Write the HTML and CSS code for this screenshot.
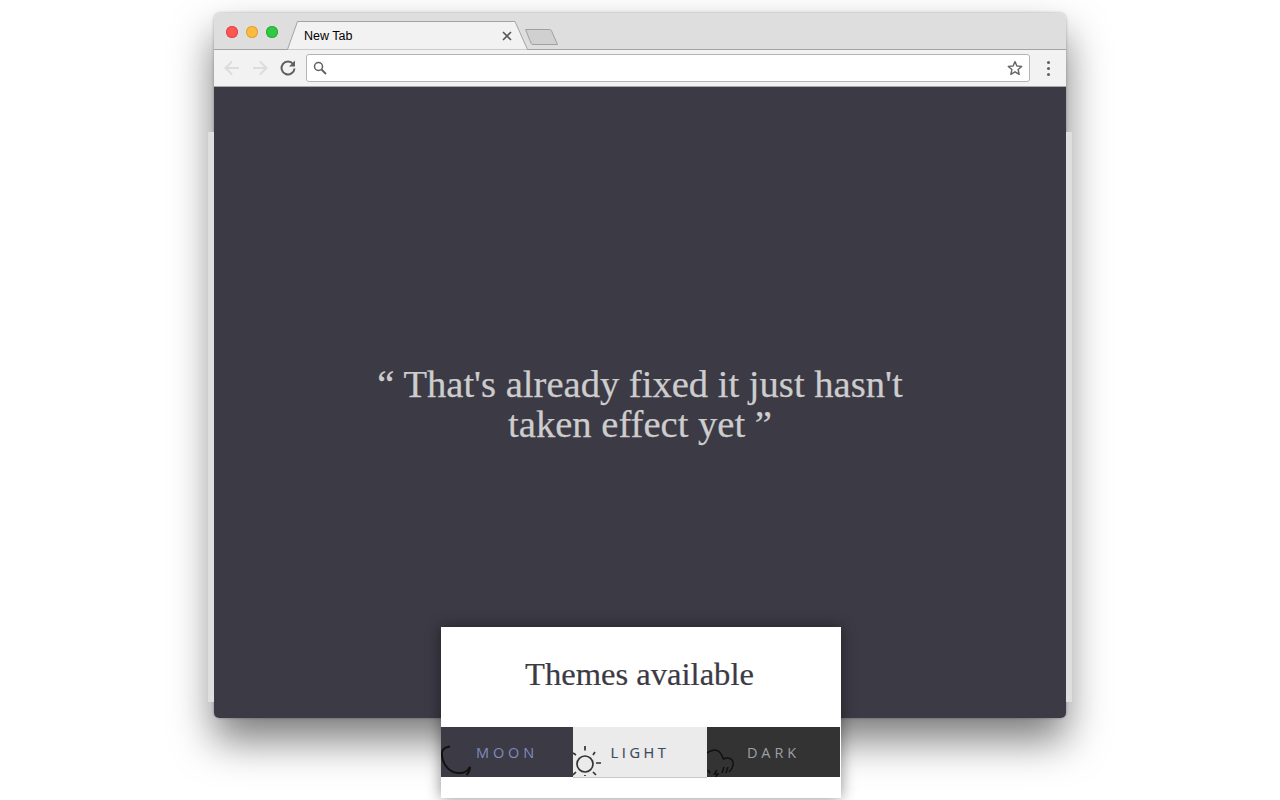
FILE: index.html
```html
<!DOCTYPE html>
<html lang="en">
<head>
<meta charset="utf-8">
<title>New Tab</title>
<link rel="stylesheet" href="styles.css">
</head>
<body>
<div class="stage">
  <div class="backsheet"></div>
  <div class="window">
    <header class="titlebar">
      <div class="lights">
        <span class="light light-red"></span>
        <span class="light light-yellow"></span>
        <span class="light light-green"></span>
      </div>
      <div class="tab">
        <svg class="tab-shape" width="242" height="30" viewBox="0 0 242 30"><path d="M0 28.500H0.500L10.500 0.500H228L240.500 28.500H242" fill="#f2f2f2" stroke="#a3a3a3" stroke-width="1"/></svg>
        <span class="tab-title">New Tab</span>
        <svg class="tab-close" width="10" height="10" viewBox="0 0 10 10"><path d="M1 1L9 9M9 1L1 9" stroke="#5a5a5a" stroke-width="1.700"/></svg>
      </div>
      <svg class="newtab" width="35" height="18" viewBox="0 0 35 18"><path d="M1.500 1.500H25.500Q27 1.500 27.600 3L33.500 16.500H9Q7.500 16.500 7 15Z" fill="#d0d0d0" stroke="#a0a0a0" stroke-width="1"/></svg>
    </header>
    <div class="toolbar">
      <svg class="tool" width="20" height="20" viewBox="0 0 20 20"><path d="M17 10H4M10 3.500L3.500 10L10 16.500" fill="none" stroke="#dcdcdc" stroke-width="2"/></svg>
      <svg class="tool" width="20" height="20" viewBox="0 0 20 20"><path d="M3 10H16M10 3.500L16.500 10L10 16.500" fill="none" stroke="#dcdcdc" stroke-width="2"/></svg>
      <svg class="tool" width="20" height="20" viewBox="0 0 20 20"><path d="M15.200 6A6.500 6.500 0 1 0 16.500 10.500" fill="none" stroke="#5f5f5f" stroke-width="2"/><path d="M17 2.600V8.600H11Z" fill="#5f5f5f"/></svg>
      <div class="omnibox">
        <svg width="14" height="14" viewBox="0 0 14 14"><circle cx="5.500" cy="5.500" r="4" fill="none" stroke="#5f5f5f" stroke-width="1.500"/><path d="M8.500 8.500L13 13" stroke="#5f5f5f" stroke-width="1.800"/></svg>
        <svg width="16" height="16" viewBox="0 0 16 16"><path d="M8 1.600L9.900 6L14.700 6.400L11.100 9.600L12.200 14.300L8 11.800L3.800 14.300L4.900 9.600L1.300 6.400L6.100 6Z" fill="none" stroke="#666" stroke-width="1.400" stroke-linejoin="round"/></svg>
      </div>
      <div class="menu"><span></span><span></span><span></span></div>
    </div>
    <main class="content">
      <p class="quote">“ That's already fixed it just hasn't<br>taken effect yet ”</p>
    </main>
  </div>
  <section class="panel">
    <h2 class="panel-title">Themes available</h2>
    <div class="themes">
      <div class="theme theme-moon">
        <svg class="theme-icon icon-moon" width="34" height="33" viewBox="0 0 34 33"><path d="M9 2.500C5 3 2 4.500 1 8C0 17 6 28 17 29C23 29.500 27 27 29 23C29 26 27.500 29 25.500 31" fill="none" stroke="#111" stroke-width="2"/></svg>
        <span>MOON</span>
      </div>
      <div class="theme theme-light">
        <svg class="theme-icon icon-sun" width="32" height="32" viewBox="0 0 32 32"><circle cx="12" cy="20" r="8" fill="none" stroke="#333" stroke-width="1.700"/><path d="M12 2V6.500M12 31V33M23 19H28M0 9L3 11M20 11L22 8M0 31L3 28M20 28L23 31" stroke="#333" stroke-width="1.700"/></svg>
        <span>LIGHT</span>
      </div>
      <div class="theme theme-dark">
        <svg class="theme-icon icon-cloud" width="28" height="28" viewBox="0 0 28 28"><path d="M0 4C3 1.500 8 0.500 10 1.500C13 2.500 15 6 16.500 10C19 8.500 23 8.500 25 11C27 14 26.500 19 22 23M10 21L7.500 25H11L8.500 28M17 18L15 24M21 18L19 24M1 21L3 24" fill="none" stroke="#111" stroke-width="1.500"/></svg>
        <span>DARK</span>
      </div>
    </div>
  </section>
</div>
</body>
</html>
```
FILE: styles.css
```css
* { box-sizing: border-box; }
html, body { margin: 0; padding: 0; height: 100%; background: #fff; overflow: hidden; }
.stage { position: relative; width: 1280px; height: 800px; padding-top: 13px; display: flex; flex-direction: column; align-items: center; }
.stage::before { content: ""; position: absolute; left: 214px; top: 13px; width: 852px; height: 705px; border-radius: 6px; box-shadow: 0 22px 42px rgba(0,0,0,.52), 0 0 3px rgba(0,0,0,.3); }
.backsheet { position: absolute; left: 208px; top: 132px; width: 864px; height: 570px; background: #dfdfdf; }
.window { position: relative; width: 852px; height: 705px; border-radius: 6px 6px 5px 5px; overflow: hidden; display: flex; flex-direction: column; }
.titlebar { height: 37px; flex: none; background: #dedede; border-bottom: 1px solid #a3a3a3; display: flex; align-items: flex-start; position: relative; }
.lights { display: flex; gap: 8px; margin: 13px 0 0 12px; }
.light { width: 12px; height: 12px; border-radius: 50%; }
.light-red { background: #fc5753; box-shadow: inset 0 0 0 1px #df4744; }
.light-yellow { background: #fdbc40; box-shadow: inset 0 0 0 1px #de9f34; }
.light-green { background: #33c748; box-shadow: inset 0 0 0 1px #27aa35; }
.tab { position: absolute; left: 73px; top: 8px; width: 242px; height: 29px; }
.tab-shape { position: absolute; left: 0; top: 0; }
.tab-title { position: absolute; left: 17px; top: 8px; font: 12.5px/15px "Liberation Sans", Arial, sans-serif; color: #000; }
.tab-close { position: absolute; left: 215px; top: 10px; }
.newtab { position: absolute; left: 310px; top: 15px; }
.toolbar { height: 37px; flex: none; background: #f2f2f2; border-bottom: 1px solid #a9a9a9; display: flex; align-items: center; padding: 0 8px; gap: 8px; }
.tool { flex: none; }
.omnibox { flex: 1; height: 28px; margin-bottom: 1px; background: #fff; border: 1px solid #b4b4b4; border-radius: 3px; display: flex; align-items: center; justify-content: space-between; padding: 0 6px; }
.menu { width: 20px; display: flex; flex-direction: column; align-items: center; gap: 3px; }
.menu span { width: 3px; height: 3px; border-radius: 50%; background: #5f5f5f; }
.content { flex: 1; background: #3c3a45; display: flex; justify-content: center; padding-top: 277px; }
.quote { margin: 0; text-align: center; color: #cdcdcd; font: 38.6px/40px "Liberation Serif", Georgia, serif; -webkit-text-stroke: .25px #cdcdcd; }
.panel { position: absolute; left: 441px; top: 627px; width: 400px; height: 171px; background: #fff; box-shadow: 0 0 14px rgba(0,0,0,.45); }
.panel-title { margin: 0 3px 0 0; height: 100px; padding-top: 28px; text-align: center; font: 400 32.6px/38px "Liberation Serif", Georgia, serif; color: #3c3a45; -webkit-text-stroke: .2px #3c3a45; }
.themes { display: flex; height: 51px; }
.theme { position: relative; height: 50px; padding-top: 2px; overflow: hidden; display: flex; align-items: center; justify-content: center; font: 14.5px/20px "Open Sans", sans-serif; letter-spacing: 3.9px; }
.theme-moon { width: 132px; background: #3c3a45; color: #7f8cbc; }
.theme-light { width: 134px; background: #ebebeb; color: #3a4a60; height: 51px; letter-spacing: 3.6px; border-bottom: 1px solid #c8c8c8; text-shadow: -.3px 0 rgba(200,120,20,.3), .3px 0 rgba(30,110,190,.3); }
.theme-dark { width: 133px; background: #333; color: #9aa0a8; }
.theme-icon { position: absolute; left: 0; top: 17px; }
.icon-cloud { top: 22px; }
```
